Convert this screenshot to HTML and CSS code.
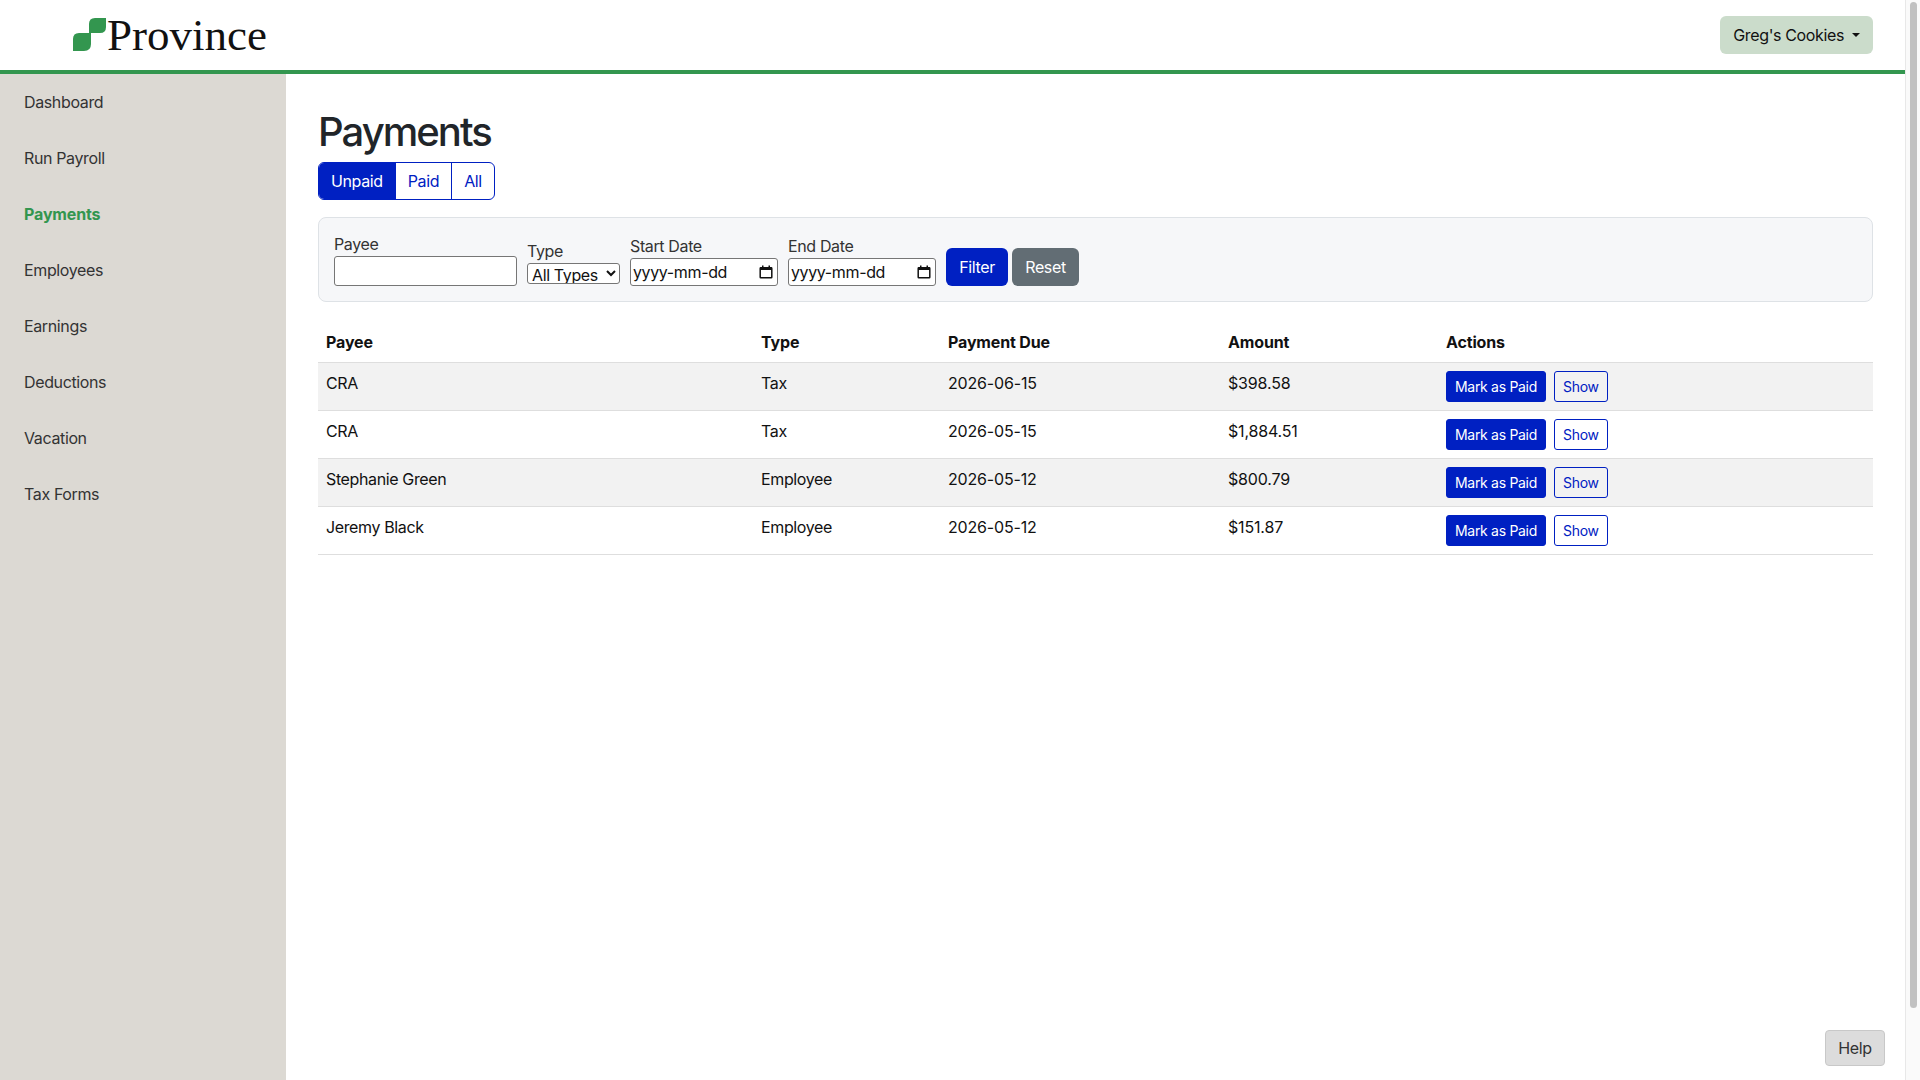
FILE: index.html
```html
<!DOCTYPE html>
<html lang="en">
<head>
    <meta charset="UTF-8">
    <title>Payments</title>
    <link rel="stylesheet" href="styles.css">
</head>
<body>
    <div class="page">
        <!-- Top bar -->
        <header class="navbar">
            <a class="brand" href="#">
                <svg class="brand-mark" width="34" height="33" viewBox="0 0 34 33">
                    <path fill="#33964f" d="M16 15V6q0-6 6-6h11v9q0 6-6 6z"/>
                    <path fill="#33964f" d="M0 33V21q0-6 6-6h12v11q0 7-7 7z"/>
                </svg>
                <span class="brand-name">Province</span>
            </a>
            <button class="company-button">Greg's Cookies<span class="caret"></span></button>
        </header>

        <div class="layout">
            <!-- Side menu -->
            <nav class="sidebar">
                <a href="#">Dashboard</a>
                <a href="#">Run Payroll</a>
                <a href="#" class="active">Payments</a>
                <a href="#">Employees</a>
                <a href="#">Earnings</a>
                <a href="#">Deductions</a>
                <a href="#">Vacation</a>
                <a href="#">Tax Forms</a>
            </nav>

            <main class="content">
                <h1>Payments</h1>

                <div class="btn-group">
                    <a href="#" class="active">Unpaid</a>
                    <a href="#">Paid</a>
                    <a href="#">All</a>
                </div>

                <form class="filter-card">
                    <div class="field">
                        <label>Payee</label>
                        <input type="text" class="payee-input">
                    </div>
                    <div class="field">
                        <label>Type</label>
                        <select class="type-select"><option>All Types</option></select>
                    </div>
                    <div class="field">
                        <label>Start Date</label>
                        <div class="date-input">
                            <span>yyyy-mm-dd</span>
                            <svg width="14" height="14" viewBox="0 0 14 14"><path fill="none" stroke="#111" stroke-width="1.500" d="M1.800 2.800h10.400a.6.6 0 0 1 .6.6v8.800a.6.6 0 0 1-.6.6H1.800a.6.6 0 0 1-.6-.6V3.400a.6.6 0 0 1 .6-.6z"/><path fill="#111" d="M1 2.500h12v2.500H1zM3 .5h1.500V3H3zM9.500.5H11V3H9.500z"/></svg>
                        </div>
                    </div>
                    <div class="field">
                        <label>End Date</label>
                        <div class="date-input">
                            <span>yyyy-mm-dd</span>
                            <svg width="14" height="14" viewBox="0 0 14 14"><path fill="none" stroke="#111" stroke-width="1.500" d="M1.800 2.800h10.400a.6.6 0 0 1 .6.6v8.800a.6.6 0 0 1-.6.6H1.800a.6.6 0 0 1-.6-.6V3.400a.6.6 0 0 1 .6-.6z"/><path fill="#111" d="M1 2.500h12v2.500H1zM3 .5h1.500V3H3zM9.500.5H11V3H9.500z"/></svg>
                        </div>
                    </div>
                    <div class="filter-actions">
                        <button type="button" class="btn btn-primary">Filter</button>
                        <button type="button" class="btn btn-secondary">Reset</button>
                    </div>
                </form>

                <table class="payments">
                    <colgroup>
                        <col class="col-payee">
                        <col class="col-type">
                        <col class="col-due">
                        <col class="col-amount">
                        <col>
                    </colgroup>
                    <thead>
                        <tr><th>Payee</th><th>Type</th><th>Payment Due</th><th>Amount</th><th>Actions</th></tr>
                    </thead>
                    <tbody>
                        <tr>
                            <td>CRA</td><td>Tax</td><td class="num">2026-06-15</td><td class="num">$398.58</td>
                            <td class="actions"><a href="#" class="btn-sm solid">Mark as Paid</a><a href="#" class="btn-sm outline">Show</a></td>
                        </tr>
                        <tr>
                            <td>CRA</td><td>Tax</td><td class="num">2026-05-15</td><td class="num">$1,884.51</td>
                            <td class="actions"><a href="#" class="btn-sm solid">Mark as Paid</a><a href="#" class="btn-sm outline">Show</a></td>
                        </tr>
                        <tr>
                            <td>Stephanie Green</td><td>Employee</td><td class="num">2026-05-12</td><td class="num">$800.79</td>
                            <td class="actions"><a href="#" class="btn-sm solid">Mark as Paid</a><a href="#" class="btn-sm outline">Show</a></td>
                        </tr>
                        <tr>
                            <td>Jeremy Black</td><td>Employee</td><td class="num">2026-05-12</td><td class="num">$151.87</td>
                            <td class="actions"><a href="#" class="btn-sm solid">Mark as Paid</a><a href="#" class="btn-sm outline">Show</a></td>
                        </tr>
                    </tbody>
                </table>
            </main>
        </div>
    </div>

    <!-- Browser scrollbar -->
    <div class="scrollbar"><div class="scrollbar-thumb"></div></div>

    <button class="help-button">Help</button>
</body>
</html>
```

FILE: styles.css
```css
* {
    box-sizing: border-box;
}

html, body {
    height: 100%;
    margin: 0;
}

body {
    display: flex;
    overflow: hidden;
    font-family: Inter, "Liberation Sans", sans-serif;
    font-size: 16px;
    letter-spacing: -0.37px; /* Inter runs wider than the reference's system font */
    color: #212529;
    background-color: #fff;
}

a {
    text-decoration: none;
}

button, select {
    letter-spacing: inherit;
}

.page {
    flex: 1;
    display: flex;
    flex-direction: column;
    min-width: 0;
}

/* Top bar */
.navbar {
    flex: 0 0 74px;
    display: flex;
    align-items: center;
    justify-content: space-between;
    padding: 0 32px 0 73px;
    border-bottom: 4px solid #33964f;
}

.brand {
    display: flex;
    align-items: flex-start;
    height: 70px;
    padding-top: 18px;
}

.brand-mark {
    flex: none;
}

.brand-name {
    margin: -9px 0 0 0;
    font-family: "Liberation Serif", serif;
    font-size: 45px;
    letter-spacing: 0;
    line-height: 52px;
    color: #111;
}

.company-button {
    display: flex;
    align-items: center;
    height: 38px;
    padding: 0 13px;
    border: none;
    border-radius: 6px;
    font: inherit;
    color: #111;
    background-color: #cbdccb;
}

.caret {
    margin-left: 8px;
    border-top: 4.800px solid #111;
    border-left: 4.800px solid transparent;
    border-right: 4.800px solid transparent;
}

.layout {
    flex: 1;
    display: flex;
    min-height: 0;
}

/* Side menu */
.sidebar {
    flex: 0 0 286px;
    display: flex;
    flex-direction: column;
    background-color: #dcd9d3;
}

.sidebar a {
    height: 56px;
    padding: 16px 24px;
    line-height: 24px;
    color: #333;
}

.sidebar a.active {
    font-weight: 700;
    letter-spacing: -0.15px;
    color: #33964f;
}

/* Main column */
.content {
    flex: 1;
    min-width: 0;
    padding: 34px 32px 0;
}

h1 {
    margin: 0 0 6px;
    font-size: 40px;
    font-weight: 500;
    letter-spacing: -1.950px;
    line-height: 48px;
}

.btn-group {
    display: inline-flex;
    height: 38px;
    border: 1px solid #0020c2;
    border-radius: 6px;
    overflow: hidden;
    vertical-align: top;
}

.btn-group a {
    display: flex;
    align-items: center;
    padding: 0 12px;
    color: #0020c2;
    border-left: 1px solid #0020c2;
}

.btn-group a:first-child {
    border-left: none;
}

.btn-group a.active {
    color: #fff;
    background-color: #0020c2;
}

/* Filter form */
.filter-card {
    display: flex;
    align-items: flex-end;
    gap: 10px;
    margin-top: 17px;
    padding: 14px 15px 15px;
    background-color: #f6f7f9;
    border: 1px solid #dee2e6;
    border-radius: 8px;
}

.field {
    display: flex;
    flex-direction: column;
}

.field label {
    line-height: 24px;
    color: #333;
}

.payee-input {
    width: 183px;
    height: 30px;
    border: 1px solid #767676;
    border-radius: 3px;
    background-color: #fff;
}

.type-select {
    width: 93px;
    height: 21px;
    margin-bottom: 2px;
    padding: 0;
    border: 1px solid #767676;
    border-radius: 3px;
    font: inherit;
    color: #111;
    background-color: #fff;
}

.date-input {
    display: flex;
    align-items: center;
    justify-content: space-between;
    width: 148px;
    height: 28px;
    padding: 0 4px 0 2px;
    border: 1px solid #767676;
    border-radius: 3px;
    color: #111;
    background-color: #fff;
}

.filter-actions {
    display: flex;
    gap: 4px;
}

.btn {
    height: 38px;
    border: none;
    border-radius: 6px;
    font: inherit;
    color: #fff;
}

.btn-primary {
    width: 62px;
    background-color: #0020c2;
}

.btn-secondary {
    width: 67px;
    background-color: #626d74;
}

/* Payments table */
.payments {
    width: 100%;
    margin-top: 20px;
    border-collapse: collapse;
    table-layout: fixed;
    color: #111;
}

.col-payee {
    width: 435px;
}

.col-type {
    width: 187px;
}

.col-due {
    width: 280px;
}

.col-amount {
    width: 218px;
}

.payments th {
    height: 40px;
    padding: 8px;
    line-height: 24px;
    letter-spacing: -0.15px;
    text-align: left;
    font-weight: 700;
    border-bottom: 1px solid #dedede;
}

.payments td {
    height: 48px;
    padding: 0 8px 8px;
    vertical-align: middle;
    border-bottom: 1px solid #dedede;
}

.payments td.num {
    letter-spacing: -0.17px;
}

.payments tbody tr:nth-child(odd) {
    background-color: #f2f2f2;
}

.payments td.actions {
    padding-bottom: 0;
}

.btn-sm {
    display: inline-block;
    height: 31px;
    padding: 0 8px;
    border: 1px solid #0020c2;
    border-radius: 3px;
    font-size: 14px;
    letter-spacing: -0.3px;
    line-height: 29px;
    vertical-align: middle;
}

.btn-sm.solid {
    margin-right: 8px;
    color: #fff;
    background-color: #0020c2;
}

.btn-sm.outline {
    color: #0020c2;
}

/* Fake browser scrollbar */
.scrollbar {
    flex: 0 0 15px;
    padding: 2px 3px 0 4px;
    background-color: #fafafa;
    border-left: 1px solid #e8e8e8;
}

.scrollbar-thumb {
    height: 1006px;
    border-radius: 4px;
    background-color: #c1c1c1;
}

.help-button {
    position: fixed;
    right: 35px;
    bottom: 14px;
    width: 60px;
    height: 36px;
    border: 1px solid #c8c8c8;
    border-radius: 4px;
    font: inherit;
    color: #333;
    background-color: #dcdcdc;
}
```
